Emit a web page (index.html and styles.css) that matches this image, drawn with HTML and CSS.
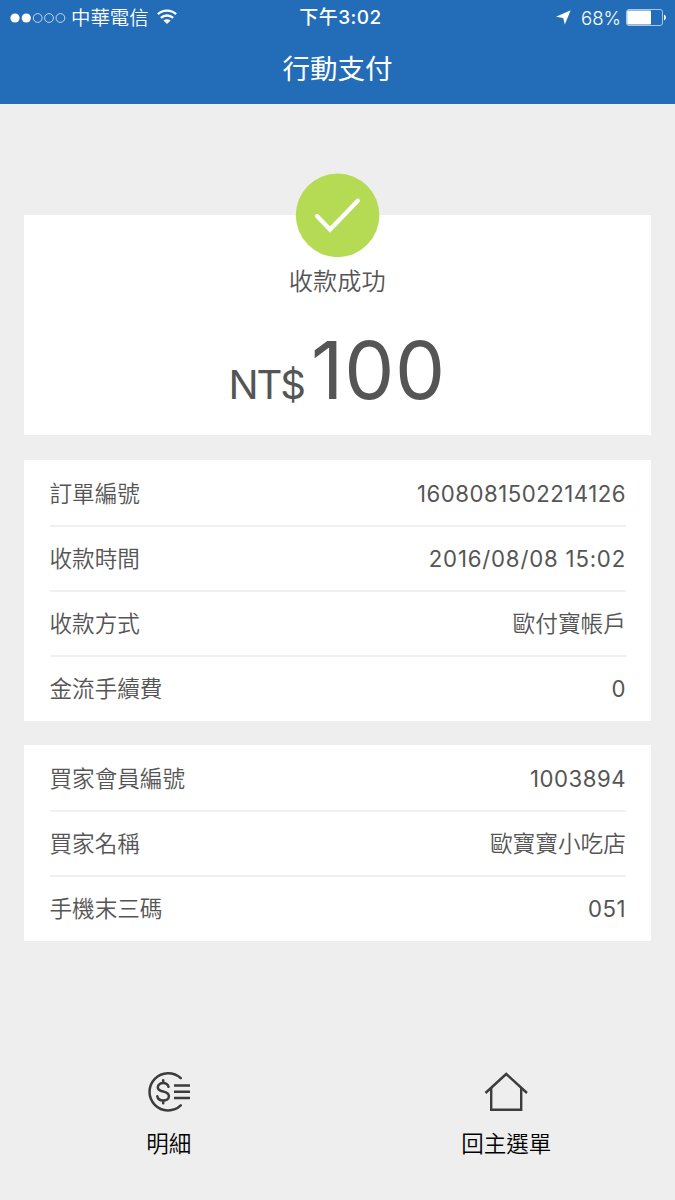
FILE: index.html
```html
<!DOCTYPE html>
<html lang="zh-Hant">
<head>
    <meta charset="UTF-8">
    <meta name="viewport" content="width=device-width, initial-scale=1.0">
    <title>行動支付</title>
    <link rel="stylesheet" href="styles.css">
</head>
<body>
    <header>
        <div class="status-bar">
            <div class="status-left">
                <svg class="signal" width="56" height="12" viewBox="0 0 56 12" fill="none" stroke="#fff">
                    <circle cx="5" cy="6" r="4.6" fill="#fff" stroke="none"/>
                    <circle cx="16.3" cy="6" r="4.6" fill="#fff" stroke="none"/>
                    <circle cx="27.7" cy="6" r="4.4" stroke-width="0.7"/>
                    <circle cx="39" cy="6" r="4.4" stroke-width="0.7"/>
                    <circle cx="50.4" cy="6" r="4.4" stroke-width="0.7"/>
                </svg>
                <span class="carrier">中華電信</span>
                <svg class="wifi" width="20" height="15" viewBox="0 0 20 15" fill="none" stroke="#fff" stroke-width="2.3">
                    <path d="M0.9 5.2a13.3 13.3 0 0 1 18.2 0"/>
                    <path d="M3.9 8.9a9 9 0 0 1 12.2 0"/>
                    <path d="M10 14.9L6.4 11.6a5.2 5.2 0 0 1 7.2 0z" fill="#fff" stroke="none"/>
                </svg>
            </div>
            <div class="time">下午3:02</div>
            <div class="status-right">
                <svg class="location" width="15" height="15" viewBox="0 0 15 15">
                    <path d="M14.7 0.2L8.8 14.6L7.2 8L0 6.8z" fill="#fff"/>
                </svg>
                <span class="percent">68%</span>
                <svg class="battery" width="40" height="17" viewBox="0 0 40 17">
                    <rect x="0.5" y="0.5" width="36" height="16" rx="2.5" fill="none" stroke="#a9c8e8" stroke-width="1"/>
                    <rect x="1.2" y="1.5" width="23.8" height="14" rx="1" fill="#fff"/>
                    <path d="M38 5.5q2 1 2 3t-2 3z" fill="#fff"/>
                </svg>
            </div>
        </div>
        <h1>行動支付</h1>
    </header>

    <main>
        <section class="card result">
            <svg class="check" width="85" height="84" viewBox="0 0 85 84">
                <circle cx="42.6" cy="42.3" r="41.8" fill="#b5db55"/>
                <path d="M22 43L35 56.6L62.8 27.8" fill="none" stroke="#fff" stroke-width="4.3" stroke-linecap="round" stroke-linejoin="miter"/>
            </svg>
            <p class="message">收款成功</p>
            <p class="amount"><span class="currency">NT$</span><span class="number">100</span></p>
        </section>

        <section class="card list">
            <div class="row"><span class="label">訂單編號</span><span class="value">1608081502214126</span></div>
            <div class="row"><span class="label">收款時間</span><span class="value date">2016/08/08 15:02</span></div>
            <div class="row"><span class="label">收款方式</span><span class="value text">歐付寶帳戶</span></div>
            <div class="row"><span class="label">金流手續費</span><span class="value">0</span></div>
        </section>

        <section class="card list">
            <div class="row"><span class="label">買家會員編號</span><span class="value">1003894</span></div>
            <div class="row"><span class="label">買家名稱</span><span class="value text">歐寶寶小吃店</span></div>
            <div class="row"><span class="label">手機末三碼</span><span class="value">051</span></div>
        </section>
    </main>

    <footer>
        <a class="nav-btn">
            <svg width="44" height="42" viewBox="0 0 44 42" fill="none" stroke="#3c3c3c" stroke-width="2.5" stroke-linecap="round">
                <path d="M33.8 7.2A18.6 18.6 0 1 0 33.8 34.4"/>
                <path d="M27 14.5H43M27 20.8H43M27 27H43" stroke-linecap="butt"/>
                <path d="M21.5 15.8C20.7 13.2 18.8 12.1 16.2 12.1C13.2 12.1 10.8 13.7 10.8 16.2C10.8 19 13.4 19.9 16.2 20.5C19.4 21.2 21.9 22.3 21.9 25.2C21.9 28 19.2 29.4 16.2 29.4C13.4 29.4 10.8 28.2 10.3 25.2M16.2 9.3V12.1M16.2 29.4V32.2"/>
            </svg>
            <span>明細</span>
        </a>
        <a class="nav-btn">
            <svg width="44" height="42" viewBox="0 0 44 42" fill="none" stroke="#3c3c3c" stroke-width="2.4">
                <path d="M1.5 22L22.2 3L43 22"/>
                <path d="M7.2 17V38.8H37.2V17"/>
            </svg>
            <span>回主選單</span>
        </a>
    </footer>
</body>
</html>
```

FILE: styles.css
```css
body {
    font-family: Inter, "Noto Sans CJK TC", sans-serif;
    margin: 0;
    padding: 0;
    background-color: #eeeeee;
    color: #555555;
    height: 1200px;
    overflow: hidden;
}
header {
    box-sizing: border-box;
    height: 104px;
    background-color: #236db8;
    color: white;
}
.status-bar {
    display: grid;
    grid-template-columns: 1fr auto 1fr;
    align-items: center;
    height: 34px;
    padding: 0 9px 0 10px;
    font-size: 19px;
    line-height: 34px;
}
.status-left,
.status-right {
    display: flex;
    align-items: center;
    height: 34px;
}
.status-right {
    justify-content: flex-end;
}
.carrier {
    margin: 0 8px 0 5px;
    padding-top: 1px;
    font-size: 19.4px;
    font-weight: 350;
}
.wifi {
    margin-top: -3px;
}
.time {
    font-weight: 500;
    font-size: 19px;
    letter-spacing: 0.5px;
    padding: 1px 0 0 5px;
}
.percent {
    margin: 0 5px 0 10px;
    font-size: 18.6px;
    font-weight: 350;
}
.battery {
    margin-top: -1px;
}
h1 {
    margin: 0;
    font-size: 27.5px;
    font-weight: 400;
    line-height: 71px;
    text-align: center;
}
main {
    display: flex;
    flex-direction: column;
    gap: 24.6px;
    padding: 111px 24.5px 0 24px;
}
.card {
    box-sizing: border-box;
    background-color: white;
}
.result {
    display: flex;
    flex-direction: column;
    align-items: center;
    height: 220.4px;
}
.check {
    margin-top: -42px;
}
.message {
    margin: 6px 0 0;
    font-size: 24.2px;
    font-weight: 350;
    line-height: 37px;
}
.amount {
    display: flex;
    align-items: baseline;
    margin: 22px 0 0;
    line-height: 96px;
}
.currency {
    margin-right: 7px;
    font-size: 40px;
    letter-spacing: -2px;
}
.number {
    font-size: 79.5px;
    letter-spacing: 0.8px;
}
.list {
    padding: 0 24.5px 0 25.5px;
}
.row {
    display: flex;
    justify-content: space-between;
    box-sizing: border-box;
    height: 65.15px;
    border-top: 2px solid #f0f0f0;
    font-size: 22.6px;
    line-height: 63px;
}
.row:first-child {
    border-top-color: transparent;
}
.label,
.text {
    font-weight: 350;
}
.value {
    font-size: 22.2px;
    letter-spacing: 0.5px;
}
.value.date {
    letter-spacing: 0.8px;
}
.value.text {
    font-size: 22.7px;
    letter-spacing: 0;
}
footer {
    display: flex;
    padding-top: 130.6px;
    color: black;
}
.nav-btn {
    display: flex;
    flex: 1;
    flex-direction: column;
    align-items: center;
    font-size: 22.5px;
    font-weight: 350;
    line-height: 34px;
}
.nav-btn span {
    margin-top: 14px;
}
```
